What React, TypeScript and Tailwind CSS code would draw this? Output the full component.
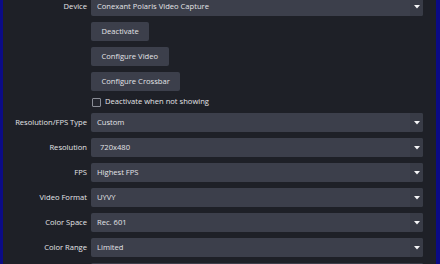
import { type ReactNode } from 'react';

const font = { fontFamily: '"Open Sans", "Noto Sans", sans-serif' };

const Label = ({ children }: { children?: ReactNode }) => (
  <div className="w-[84px] shrink-0 text-right text-[7.6px] text-[#e4e4e8]">{children}</div>
);

const Combo = ({ value, editable = false }: { value: string; editable?: boolean }) => (
  <div className="flex-1 h-[19px] flex items-stretch bg-[#3c3f4b] rounded-[2px] overflow-hidden">
    <div className={`flex-1 flex items-center text-[7.6px] text-[#e4e4e8] ${editable ? 'pl-[9px]' : 'pl-[6px]'}`}>
      {value}
    </div>
    <div className="w-[13px] flex items-center justify-center bg-[#383b46]">
      <svg width="6" height="4" viewBox="0 0 6 4">
        <path d="M0 0 H6 L3 3.5 Z" fill="#f4f4f6" />
      </svg>
    </div>
  </div>
);

const Row = ({ label, children }: { label?: string; children: ReactNode }) => (
  <div className="flex items-center gap-[4px]">
    <Label>{label}</Label>
    {children}
  </div>
);

const Button = ({ children }: { children: ReactNode }) => (
  <div className="h-[19px] px-[10.5px] flex items-center bg-[#3c3f4b] rounded-[2px] text-[7.6px] text-[#e4e4e8]">
    {children}
  </div>
);

export default function App() {
  return (
    <div className="w-[440px] h-[264px] overflow-hidden bg-[#0b0b86] pl-[3px] pr-[4px]" style={font}>
      <div className="h-full bg-[#1e2027] flex">
        <div className="flex-1 flex flex-col gap-[6px] -mt-[3px] pr-[13px]">
          <Row label="Device"><Combo value="Conexant Polaris Video Capture" /></Row>
          <Row><Button>Deactivate</Button></Row>
          <Row><Button>Configure Video</Button></Row>
          <Row><Button>Configure Crossbar</Button></Row>
          <Row>
            <div className="h-[10px] flex items-center gap-[4px] pl-[1px] text-[7.6px] text-[#e4e4e8]">
              <div className="w-[9px] h-[9px] border border-[#8a8d96] rounded-[1px] bg-[#23252d]" />
              <span>Deactivate when not showing</span>
            </div>
          </Row>
          <Row label="Resolution/FPS Type"><Combo value="Custom" /></Row>
          <Row label="Resolution"><Combo value="720x480" editable /></Row>
          <Row label="FPS"><Combo value="Highest FPS" /></Row>
          <Row label="Video Format"><Combo value="UYVY" /></Row>
          <Row label="Color Space"><Combo value="Rec. 601" /></Row>
          <Row label="Color Range"><Combo value="Limited" /></Row>
          <Row label=""><Combo value="" /></Row>
        </div>
      </div>
    </div>
  );
}
